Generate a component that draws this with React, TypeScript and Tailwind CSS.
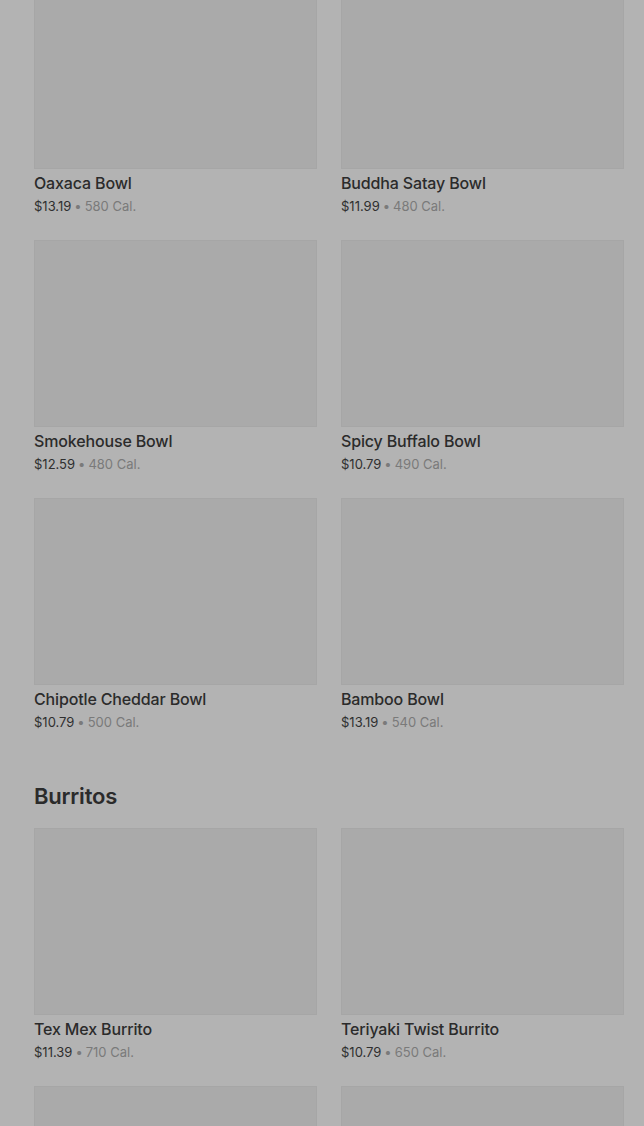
import React from 'react';

interface Item {
  name: string;
  price: string;
  cal: number;
}

const bowls: Item[] = [
  { name: 'Oaxaca Bowl', price: '$13.19', cal: 580 },
  { name: 'Buddha Satay Bowl', price: '$11.99', cal: 480 },
  { name: 'Smokehouse Bowl', price: '$12.59', cal: 480 },
  { name: 'Spicy Buffalo Bowl', price: '$10.79', cal: 490 },
  { name: 'Chipotle Cheddar Bowl', price: '$10.79', cal: 500 },
  { name: 'Bamboo Bowl', price: '$13.19', cal: 540 },
];

const burritos: Item[] = [
  { name: 'Tex Mex Burrito', price: '$11.39', cal: 710 },
  { name: 'Teriyaki Twist Burrito', price: '$10.79', cal: 650 },
  { name: 'Veggie Burrito', price: '$10.19', cal: 620 },
  { name: 'Chicken Burrito', price: '$11.99', cal: 690 },
];

const Card: React.FC<{ item: Item }> = ({ item }) => (
  <div className="flex flex-col pb-[1px]">
    <div className="h-[187px] bg-[#aaaaaa] border border-[#a6a6a6]" />
    <div className="mt-[4px] text-[16px] leading-[20px] font-medium tracking-[-0.15px] text-[#2b2b2b]">{item.name}</div>
    <div className="mt-[4px] text-[13px] leading-[18px] text-[#7a7a7a]">
      <span className="text-[#2f2f2f]">{item.price}</span>
      <span className="mx-[3px]">•</span>
      {item.cal} Cal.
    </div>
  </div>
);

export default function App() {
  return (
    <div
      className="min-h-screen bg-[#b3b3b3] pl-[34px] pr-[20px] pb-[24px]"
      style={{ fontFamily: 'Inter, "Noto Sans", sans-serif' }}
    >
      <div className="-mt-[18px] grid grid-cols-2 gap-x-[24px] gap-y-[24px]">
        {bowls.map((b) => (
          <Card key={b.name} item={b} />
        ))}
      </div>

      {/* Burritos */}
      <h2 className="mt-[48px] mb-[16px] text-[22px] leading-[32px] font-semibold tracking-[-0.2px] text-[#2b2b2b]">Burritos</h2>
      <div className="grid grid-cols-2 gap-x-[24px] gap-y-[24px]">
        {burritos.map((b) => (
          <Card key={b.name} item={b} />
        ))}
      </div>
    </div>
  );
}
